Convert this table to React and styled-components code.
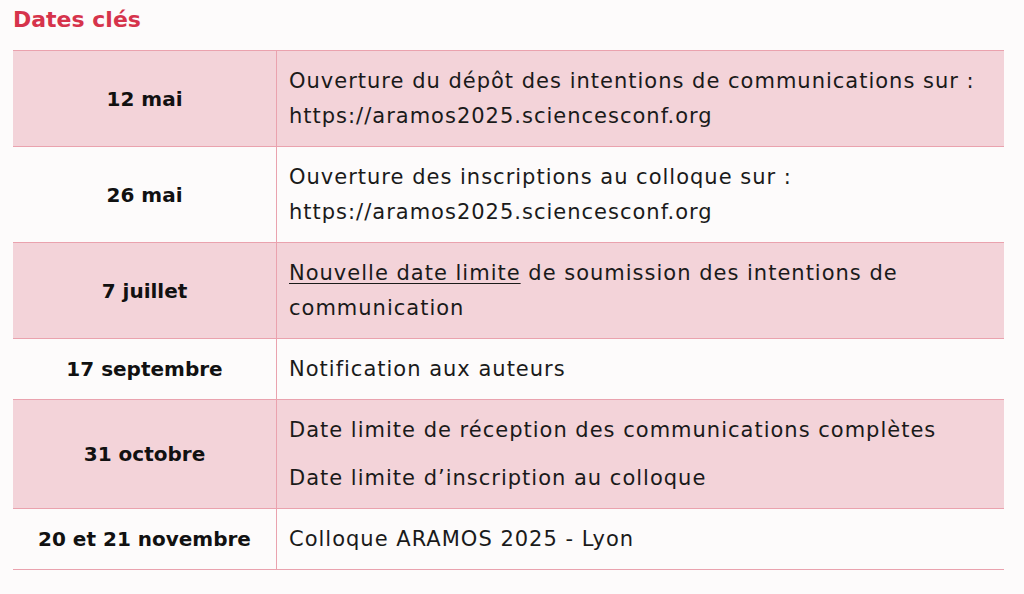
import styled, { createGlobalStyle } from "styled-components";

const Global = createGlobalStyle`
  body {
    margin: 0;
    background: #fdfbfb;
    font-family: "DejaVu Sans", "Liberation Sans", sans-serif;
    color: #111;
  }
`;

const Page = styled.div`
  padding: 4px 20px 0 13px;
`;

const Title = styled.h2`
  margin: 0 0 14px;
  font-size: 22px;
  font-weight: 700;
  color: #d6334b;
  line-height: 32px;
`;

const Table = styled.table`
  width: 991px;
  border-collapse: collapse;
`;

const Row = styled.tr`
  background: ${(p) => (p.$shaded ? "#f3d3d9" : "transparent")};
  border-top: 1px solid #eaa2ae;
  border-bottom: 1px solid #eaa2ae;
`;

const DateCell = styled.td`
  width: 263px;
  padding: 0;
  text-align: center;
  font-weight: 700;
  font-size: 20px;
  border-right: 1px solid #eaa2ae;
`;

const TextCell = styled.td`
  padding: 13px 12px 12px 12px;
  font-size: 21px;
  letter-spacing: 1px;
  line-height: 35px;
  color: #1a1a1a;
  p {
    margin: 0;
  }
  p + p {
    margin-top: 13px;
  }
  u {
    text-decoration-thickness: 1px;
    text-underline-offset: 3px;
  }
`;

const rows = [
  {
    date: "12 mai",
    body: (
      <p>
        Ouverture du dépôt des intentions de communications sur :<br />
        https://aramos2025.sciencesconf.org
      </p>
    ),
  },
  {
    date: "26 mai",
    body: (
      <p>
        Ouverture des inscriptions au colloque sur :<br />
        https://aramos2025.sciencesconf.org
      </p>
    ),
  },
  {
    date: "7 juillet",
    body: (
      <p>
        <u>Nouvelle date limite</u> de soumission des intentions de communication
      </p>
    ),
  },
  { date: "17 septembre", body: <p>Notification aux auteurs</p> },
  {
    date: "31 octobre",
    body: (
      <>
        <p>Date limite de réception des communications complètes</p>
        <p>Date limite d’inscription au colloque</p>
      </>
    ),
  },
  { date: "20 et 21 novembre", body: <p>Colloque ARAMOS 2025 - Lyon</p> },
];

export default function App() {
  return (
    <>
      <Global />
      <Page>
        <Title>Dates clés</Title>
        <Table>
          <tbody>
            {rows.map((r, i) => (
              <Row key={r.date} $shaded={i % 2 === 0}>
                <DateCell>{r.date}</DateCell>
                <TextCell>{r.body}</TextCell>
              </Row>
            ))}
          </tbody>
        </Table>
      </Page>
    </>
  );
}
